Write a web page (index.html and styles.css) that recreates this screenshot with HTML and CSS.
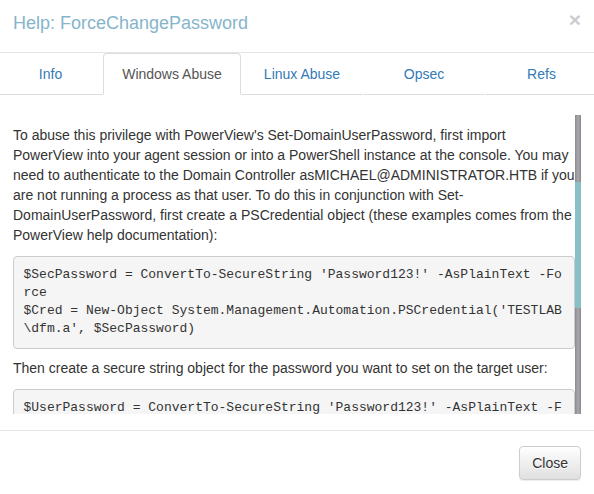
FILE: index.html
```html
<!DOCTYPE html>
<html>
<head>
<meta charset="utf-8">
<link rel="stylesheet" href="styles.css">
</head>
<body>
<div class="modal">
  <div class="modal-header">
    <button class="close" type="button">×</button>
    <h4 class="modal-title">Help: ForceChangePassword</h4>
  </div>
  <div class="modal-body">
    <ul class="nav-tabs">
      <li><a>Info</a></li>
      <li class="active"><a>Windows Abuse</a></li>
      <li><a>Linux Abuse</a></li>
      <li><a>Opsec</a></li>
      <li><a>Refs</a></li>
    </ul>
    <div class="tab-content">
      <div class="scroll">
        <div class="scroll-content">
          <p>To abuse this privilege with PowerView's Set-DomainUserPassword, first import PowerView into your agent session or into a PowerShell instance at the console. You may need to authenticate to the Domain Controller asMICHAEL@ADMINISTRATOR.HTB if you are not running a process as that user. To do this in conjunction with Set-DomainUserPassword, first create a PSCredential object (these examples comes from the PowerView help documentation):</p>
<pre>$SecPassword = ConvertTo-SecureString 'Password123!' -AsPlainText -Force
$Cred = New-Object System.Management.Automation.PSCredential('TESTLAB\dfm.a', $SecPassword)</pre>
          <p>Then create a secure string object for the password you want to set on the target user:</p>
<pre>$UserPassword = ConvertTo-SecureString 'Password123!' -AsPlainText -Force</pre>
        </div>
        <div class="scrollbar"><div class="thumb"></div></div>
      </div>
    </div>
  </div>
  <div class="modal-footer">
    <button class="btn" type="button">Close</button>
  </div>
</div>
</body>
</html>
```
FILE: styles.css
```css
html, body {
  margin: 0;
  padding: 0;
  background: #fff;
  overflow: hidden;
}
body {
  font-family: "Liberation Sans", Arial, Helvetica, sans-serif;
  font-size: 14px;
  line-height: 1.42857;
  color: #333;
}
.modal {
  width: 600px;
  margin: -4px 0 0 -2px;
  background: #fff;
}
.modal-header {
  padding: 15px;
  border-bottom: 1px solid #e5e5e5;
}
.modal-title {
  margin: 0;
  font-size: 18px;
  font-weight: 500;
  line-height: 1.42857;
  color: #86b5cb;
}
.close {
  float: right;
  margin-top: -2px;
  margin-right: 2px;
  padding: 0;
  border: 0;
  background: transparent;
  font-family: "Liberation Sans", Arial, sans-serif;
  font-size: 21px;
  font-weight: bold;
  line-height: 1;
  color: #000;
  opacity: 0.2;
  text-shadow: 0 1px 0 #fff;
}
.modal-body {
  padding: 0;
}
.nav-tabs {
  list-style: none;
  margin: 0;
  padding: 0;
  display: grid;
  grid-template-columns: 105px 138px 122px 122px 1fr;
}
.nav-tabs li a {
  display: block;
  padding: 10px 15px;
  line-height: 20px;
  text-align: center;
  color: #337ab7;
  border: 1px solid transparent;
  border-bottom: 1px solid #ddd;
  border-radius: 4px 4px 0 0;
}
.nav-tabs li.active a {
  color: #555;
  background: #fff;
  border: 1px solid #ddd;
  border-bottom-color: transparent;
}
.tab-content {
  padding: 20px 15px 16px;
}
.scroll {
  display: flex;
  height: 299px;
}
.scroll-content {
  width: 562px;
  padding-top: 11px;
  overflow: hidden;
  box-sizing: border-box;
}
.scroll-content p {
  margin: 0 0 10px;
}
pre {
  margin: 0 0 10px;
  padding: 9.5px;
  font-family: "Liberation Mono", "Courier New", monospace;
  font-size: 13px;
  line-height: 18px;
  color: #333;
  background: #f5f5f5;
  border: 1px solid #ccc;
  border-radius: 4px;
  white-space: pre-wrap;
  word-break: break-all;
  word-wrap: break-word;
}
.scrollbar {
  width: 6px;
  height: 299px;
  background: linear-gradient(to right, #8a8a8e, #a9a9ad 50%, #8a8a8e);
}
.thumb {
  margin-top: 67px;
  height: 126px;
  background: #88c0c5;
}
.modal-footer {
  padding: 15px 17px 15px 15px;
  border-top: 1px solid #e5e5e5;
  text-align: right;
}
.btn {
  display: inline-block;
  padding: 6px 12px;
  font-family: "Liberation Sans", Arial, sans-serif;
  font-size: 14px;
  line-height: 20px;
  color: #333;
  border: 1px solid #ccc;
  border-radius: 4px;
  background: linear-gradient(to bottom, #fff 0, #e0e0e0 100%);
  text-shadow: 0 1px 0 #fff;
  box-shadow: inset 0 1px 0 rgba(255,255,255,.15), 0 1px 1px rgba(0,0,0,.075);
}
```
